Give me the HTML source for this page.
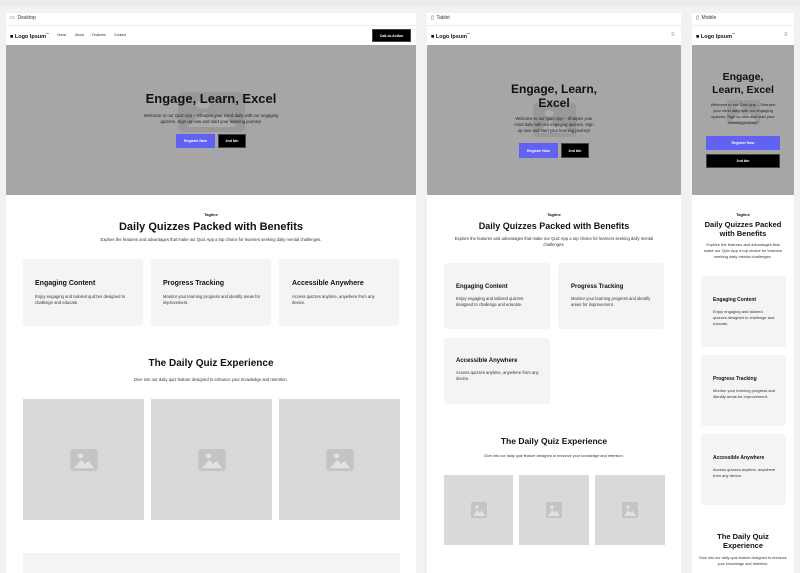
<!DOCTYPE html>
<html><head><meta charset="utf-8"><style>
*{margin:0;padding:0;box-sizing:border-box}
body{width:800px;height:569px;overflow:hidden;background:#f2f2f2;font-family:"Liberation Sans",sans-serif;color:#111;position:relative}
.a{position:absolute}
.w{background:#fff}
.lab{font-size:5px;color:#333}
.hero{background:#a6a6a6}
.c{text-align:center}
.b{font-weight:bold}
.btnp{background:#6161f2;color:#fff;font-size:3.6px;font-weight:bold;display:flex;align-items:center;justify-content:center}
.btnk{background:#000;color:#fff;font-size:3.6px;font-weight:bold;display:flex;align-items:center;justify-content:center;border:1px solid #444}
.card{background:#f4f4f4;border-radius:3px}
.ct{font-size:7px;font-weight:bold}
.cx{font-size:4.2px;line-height:6px;color:#333}
.img{background:#d9d9d9}
.ico{position:absolute;left:50%;top:50%;transform:translate(-50%,-50%)}
.logo{font-size:5.5px;font-weight:bold}
.nav{font-size:3.5px;color:#333}
</style></head><body>
<svg width="0" height="0" style="position:absolute"><defs>
<symbol id="pic" viewBox="0 0 24 24"><rect x="0" y="0" width="24" height="24" rx="2.5" fill="#c4c4c4"/><circle cx="9" cy="7.5" r="2.5" fill="#e2e2e2"/><path d="M3 21 L9.5 12 L13 16.5 L16 13 L21 21 Z" fill="#e2e2e2"/></symbol>
<symbol id="pich" viewBox="0 0 24 24"><rect x="0" y="0" width="24" height="24" rx="2.5" fill="#999"/><circle cx="9" cy="7.5" r="2.5" fill="#ababab"/><path d="M3 21 L9.5 12 L13 16.5 L16 13 L21 21 Z" fill="#ababab"/></symbol>
</defs></svg>
<div class="a" style="left:0;top:0;width:800px;height:7px;background:#ececec"></div>

<!-- Desktop -->
<div class="a w" style="left:6px;top:13px;width:410px;height:560px"></div>
<div class="a lab" style="left:10px;top:15px">▭&nbsp; Desktop</div>
<div class="a" style="left:6px;top:25px;width:410px;height:1px;background:#eee"></div>
<div class="a logo" style="left:10px;top:32px">■ Logo Ipsum<sup style="font-size:3px">™</sup></div>
<div class="a nav" style="left:57px;top:33px">Home</div>
<div class="a nav" style="left:75px;top:33px">About</div>
<div class="a nav" style="left:92px;top:33px">Features</div>
<div class="a nav" style="left:114px;top:33px">Contact</div>
<div class="a btnk" style="left:372px;top:29px;width:39px;height:13px">Call-to-Action</div>
<div class="a hero" style="left:6px;top:45px;width:410px;height:150px"></div>
<svg class="a" style="left:178px;top:92px" width="67" height="40" viewBox="0 0 24 24" preserveAspectRatio="none"><use href="#pich"/></svg>
<div class="a c b" style="left:6px;top:91px;width:410px;font-size:13px">Engage, Learn, Excel</div>
<div class="a c" style="left:136px;top:113px;width:150px;font-size:4.3px;line-height:6px;color:#222">Welcome to our Quiz App – Sharpen your mind daily with our engaging quizzes. Sign up now and start your learning journey!</div>
<div class="a btnp" style="left:176px;top:134px;width:39px;height:14px">Register Now</div>
<div class="a btnk" style="left:218px;top:134px;width:28px;height:14px">2nd btn</div>
<div class="a c b" style="left:6px;top:212px;width:410px;font-size:4px">Tagline</div>
<div class="a c b" style="left:6px;top:221px;width:410px;font-size:11px">Daily Quizzes Packed with Benefits</div>
<div class="a c" style="left:6px;top:237px;width:410px;font-size:4.2px;color:#333">Explore the features and advantages that make our Quiz App a top choice for learners seeking daily mental challenges.</div>
<div class="a card" style="left:23px;top:259px;width:120px;height:67px"></div>
<div class="a card" style="left:151px;top:259px;width:120px;height:67px"></div>
<div class="a card" style="left:279px;top:259px;width:120px;height:67px"></div>
<div class="a ct" style="left:35px;top:280px">Engaging Content</div>
<div class="a cx" style="left:35px;top:294px;width:100px">Enjoy engaging and tailored quizzes designed to challenge and educate.</div>
<div class="a ct" style="left:163px;top:280px">Progress Tracking</div>
<div class="a cx" style="left:163px;top:294px;width:100px">Monitor your learning progress and identify areas for improvement.</div>
<div class="a ct" style="left:292px;top:280px">Accessible Anywhere</div>
<div class="a cx" style="left:292px;top:294px;width:92px">Access quizzes anytime, anywhere from any device.</div>
<div class="a c b" style="left:6px;top:358px;width:410px;font-size:10px">The Daily Quiz Experience</div>
<div class="a c" style="left:6px;top:377px;width:410px;font-size:4.2px;color:#333">Dive into our daily quiz feature designed to enhance your knowledge and retention.</div>
<div class="a img" style="left:23px;top:399px;width:121px;height:121px"><svg class="ico" width="27" height="22" viewBox="0 0 24 24" preserveAspectRatio="none"><use href="#pic"/></svg></div>
<div class="a img" style="left:151px;top:399px;width:121px;height:121px"><svg class="ico" width="27" height="22" viewBox="0 0 24 24" preserveAspectRatio="none"><use href="#pic"/></svg></div>
<div class="a img" style="left:279px;top:399px;width:121px;height:121px"><svg class="ico" width="27" height="22" viewBox="0 0 24 24" preserveAspectRatio="none"><use href="#pic"/></svg></div>
<div class="a card" style="left:23px;top:553px;width:377px;height:20px;border-radius:0"></div>

<!-- Tablet -->
<div class="a w" style="left:427px;top:13px;width:254px;height:560px"></div>
<div class="a lab" style="left:431px;top:15px">▯&nbsp; Tablet</div>
<div class="a" style="left:427px;top:25px;width:254px;height:1px;background:#eee"></div>
<div class="a logo" style="left:431px;top:32px">■ Logo Ipsum<sup style="font-size:3px">™</sup></div>
<div class="a nav" style="left:671px;top:32px;font-size:6px;color:#888">≡</div>
<div class="a hero" style="left:427px;top:45px;width:254px;height:150px"></div>
<svg class="a" style="left:533px;top:103px" width="43" height="34" viewBox="0 0 24 24" preserveAspectRatio="none"><use href="#pich"/></svg>
<div class="a c b" style="left:427px;top:82px;width:254px;font-size:12px;line-height:14px;padding:0 80px">Engage, Learn, Excel</div>
<div class="a c" style="left:512px;top:116px;width:84px;font-size:4.2px;line-height:6px;color:#222">Welcome to our Quiz App – Sharpen your mind daily with our engaging quizzes. Sign up now and start your learning journey!</div>
<div class="a btnp" style="left:519px;top:143px;width:39px;height:15px">Register Now</div>
<div class="a btnk" style="left:561px;top:143px;width:28px;height:15px">2nd btn</div>
<div class="a c b" style="left:427px;top:212px;width:254px;font-size:4px">Tagline</div>
<div class="a c b" style="left:427px;top:221px;width:254px;font-size:9px">Daily Quizzes Packed with Benefits</div>
<div class="a c" style="left:447px;top:236px;width:214px;font-size:4.2px;line-height:6px;color:#333">Explore the features and advantages that make our Quiz App a top choice for learners seeking daily mental challenges.</div>
<div class="a card" style="left:444px;top:263px;width:106px;height:66px"></div>
<div class="a card" style="left:558px;top:263px;width:106px;height:66px"></div>
<div class="a card" style="left:444px;top:338px;width:106px;height:66px"></div>
<div class="a ct" style="left:456px;top:284px;font-size:6px">Engaging Content</div>
<div class="a cx" style="left:456px;top:296px;width:85px">Enjoy engaging and tailored quizzes designed to challenge and educate.</div>
<div class="a ct" style="left:571px;top:284px;font-size:6px">Progress Tracking</div>
<div class="a cx" style="left:571px;top:296px;width:85px">Monitor your learning progress and identify areas for improvement.</div>
<div class="a ct" style="left:456px;top:358px;font-size:6px">Accessible Anywhere</div>
<div class="a cx" style="left:456px;top:370px;width:85px">Access quizzes anytime, anywhere from any device.</div>
<div class="a c b" style="left:427px;top:436px;width:254px;font-size:8.5px">The Daily Quiz Experience</div>
<div class="a c" style="left:427px;top:454px;width:254px;font-size:3.8px;color:#333">Dive into our daily quiz feature designed to enhance your knowledge and retention.</div>
<div class="a img" style="left:444px;top:475px;width:69px;height:70px"><svg class="ico" width="16" height="16" viewBox="0 0 24 24"><use href="#pic"/></svg></div>
<div class="a img" style="left:519px;top:475px;width:70px;height:70px"><svg class="ico" width="16" height="16" viewBox="0 0 24 24"><use href="#pic"/></svg></div>
<div class="a img" style="left:595px;top:475px;width:70px;height:70px"><svg class="ico" width="16" height="16" viewBox="0 0 24 24"><use href="#pic"/></svg></div>

<!-- Mobile -->
<div class="a w" style="left:692px;top:13px;width:102px;height:560px"></div>
<div class="a lab" style="left:696px;top:15px">▯&nbsp; Mobile</div>
<div class="a" style="left:692px;top:25px;width:102px;height:1px;background:#eee"></div>
<div class="a logo" style="left:696px;top:32px">■ Logo Ipsum<sup style="font-size:3px">™</sup></div>
<div class="a nav" style="left:784px;top:32px;font-size:6px;color:#888">≡</div>
<div class="a hero" style="left:692px;top:45px;width:102px;height:150px"></div>
<svg class="a" style="left:727px;top:100px" width="33" height="24" viewBox="0 0 24 24" preserveAspectRatio="none"><use href="#pich"/></svg>
<div class="a c b" style="left:692px;top:71px;width:102px;font-size:10.5px;line-height:12.5px">Engage,<br>Learn, Excel</div>
<div class="a c" style="left:707px;top:102px;width:72px;font-size:4px;line-height:6px;color:#222">Welcome to our Quiz App – Sharpen your mind daily with our engaging quizzes. Sign up now and start your learning journey!</div>
<div class="a btnp" style="left:706px;top:136px;width:74px;height:14px">Register Now</div>
<div class="a btnk" style="left:706px;top:154px;width:74px;height:14px">2nd btn</div>
<div class="a c b" style="left:692px;top:212px;width:102px;font-size:4px">Tagline</div>
<div class="a c b" style="left:692px;top:220px;width:102px;font-size:7.5px;line-height:9px">Daily Quizzes Packed<br>with Benefits</div>
<div class="a c" style="left:702px;top:242px;width:82px;font-size:4px;line-height:6px;color:#333">Explore the features and advantages that make our Quiz App a top choice for learners seeking daily mental challenges.</div>
<div class="a card" style="left:701px;top:276px;width:85px;height:71px"></div>
<div class="a card" style="left:701px;top:355px;width:85px;height:71px"></div>
<div class="a card" style="left:701px;top:434px;width:85px;height:71px"></div>
<div class="a ct" style="left:713px;top:297px;font-size:5px">Engaging Content</div>
<div class="a cx" style="left:713px;top:309px;width:64px;font-size:4px">Enjoy engaging and tailored quizzes designed to challenge and educate.</div>
<div class="a ct" style="left:713px;top:376px;font-size:5px">Progress Tracking</div>
<div class="a cx" style="left:713px;top:388px;width:64px;font-size:4px">Monitor your learning progress and identify areas for improvement.</div>
<div class="a ct" style="left:713px;top:455px;font-size:5px">Accessible Anywhere</div>
<div class="a cx" style="left:713px;top:467px;width:64px;font-size:4px">Access quizzes anytime, anywhere from any device.</div>
<div class="a c b" style="left:692px;top:532px;width:102px;font-size:7.5px;line-height:9px">The Daily Quiz<br>Experience</div>
<div class="a c" style="left:699px;top:555px;width:88px;font-size:3.8px;line-height:6px;color:#333">Dive into our daily quiz feature designed to enhance your knowledge and retention.</div>
</body></html>
